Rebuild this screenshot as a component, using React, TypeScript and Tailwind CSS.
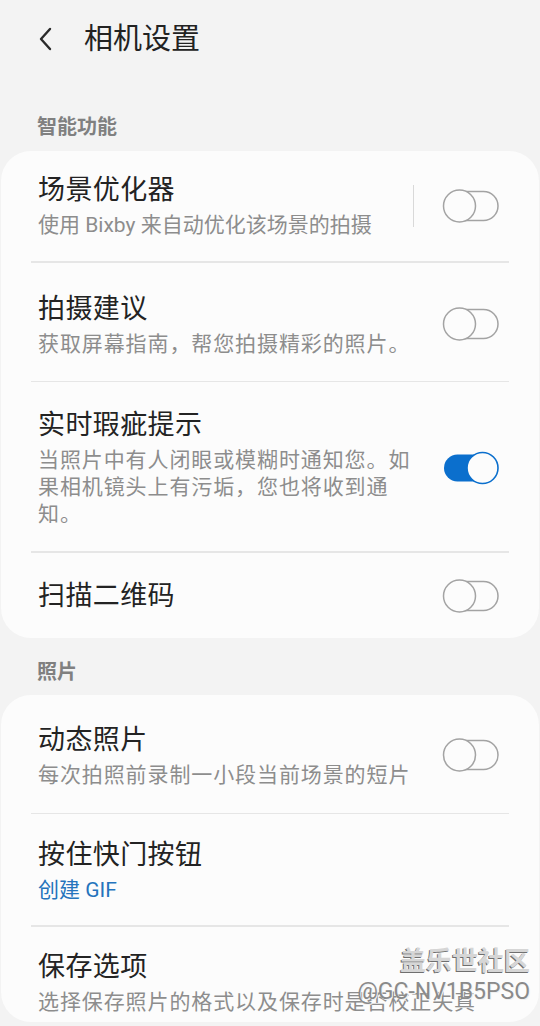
import React from "react";

const font = { fontFamily: 'Roboto, "Noto Sans CJK SC", sans-serif' };

function Toggle({ on = false }: { on?: boolean }) {
  if (on) {
    return (
      <svg width="58" height="36" viewBox="0 0 58 36" className="shrink-0">
        <rect x="2" y="4.5" width="52" height="27" rx="13.5" fill="#0b6fcd" />
        <circle cx="40.5" cy="18" r="15.5" fill="#fcfcfc" stroke="#0b6fcd" strokeWidth="1.6" />
      </svg>
    );
  }
  return (
    <svg width="58" height="36" viewBox="0 0 58 36" className="shrink-0">
      <rect x="4" y="3.5" width="52" height="29" rx="14.5" fill="none" stroke="#a3a3a3" strokeWidth="1.5" />
      <circle cx="17.5" cy="18" r="16" fill="#fcfcfc" stroke="#a3a3a3" strokeWidth="1.5" />
    </svg>
  );
}

interface RowProps {
  title: string;
  sub?: string;
  blueSub?: boolean;
  tight?: boolean;
  toggle?: "on" | "off";
  divider?: boolean;
  className: string;
}

function Row({ title, sub, blueSub, tight, toggle, divider, className }: RowProps) {
  return (
    <div className={`flex items-center pl-[37px] pr-[39px] ${className}`}>
      <div className={`flex-1 min-w-0 flex flex-col gap-[4px] ${divider ? "" : "mr-[23px]"}`}>
        <div className="text-[27px] leading-[36px] tracking-[0.4px] text-[#232323]">{title}</div>
        {sub && (
          <div
            className={`text-[21px] leading-[27px] ${tight ? "tracking-normal" : "tracking-[0.9px]"} ${
              blueSub ? "text-[#2574bd]" : "text-[#8d8d8d]"
            }`}
          >
            {sub}
          </div>
        )}
      </div>
      {divider && <div className="w-px h-[42px] bg-[#d9d9d9] mr-[28px]" />}
      {toggle && <Toggle on={toggle === "on"} />}
    </div>
  );
}

const Line = () => <div className="mx-[30px] h-[1.5px] bg-[#e6e6e6]" />;

export default function App() {
  return (
    <div className="w-[540px] h-[1026px] overflow-hidden bg-[#f3f3f3] relative" style={font}>
      {/* header */}
      <div className="h-[78px] flex items-center pl-[36px]">
        <svg width="22" height="26" viewBox="0 0 22 26" className="mr-[26px]">
          <path d="M14 3 L5 13 L14 23" fill="none" stroke="#2a2a2a" strokeWidth="2.4" strokeLinecap="round" strokeLinejoin="round" />
        </svg>
        <span className="text-[29px] text-[#222] leading-none">相机设置</span>
      </div>

      <div className="pt-[37px] pb-[12px] pl-[37px] text-[20px] leading-[24px] font-semibold text-[#808080]">
        智能功能
      </div>

      <div className="mx-[1px] bg-[#fcfcfc] rounded-[30px]">
        <Row className="pt-[21px] pb-[22px]" title="场景优化器" sub="使用 Bixby 来自动优化该场景的拍摄" tight toggle="off" divider />
        <Line />
        <Row className="pt-[28px] pb-[23px]" title="拍摄建议" sub="获取屏幕指南，帮您拍摄精彩的照片。" toggle="off" />
        <Line />
        <Row
          className="pt-[25px] pb-[23px]"
          title="实时瑕疵提示"
          sub="当照片中有人闭眼或模糊时通知您。如果相机镜头上有污垢，您也将收到通知。"
          toggle="on"
        />
        <Line />
        <Row className="pt-[25px] pb-[24px]" title="扫描二维码" toggle="off" />
      </div>

      <div className="pt-[22px] pb-[11px] pl-[37px] text-[20px] leading-[24px] font-semibold text-[#808080]">
        照片
      </div>

      <div className="mx-[1px] bg-[#fcfcfc] rounded-[30px]">
        <Row className="pt-[27px] pb-[24px]" title="动态照片" sub="每次拍照前录制一小段当前场景的短片" toggle="off" />
        <Line />
        <Row className="pt-[23px] pb-[21px]" title="按住快门按钮" sub="创建 GIF" blueSub tight />
        <Line />
        <Row className="pt-[22px] pb-[6px]" title="保存选项" sub="选择保存照片的格式以及保存时是否校正失真" />
      </div>

      {/* watermark */}
      <div className="absolute right-[10px] top-[944px] flex flex-col items-end pointer-events-none">
        <span className="text-[26px] leading-[34px] font-bold text-[#d6d6d6] [text-shadow:-1px_1px_0_#6f6f6f]">
          盖乐世社区
        </span>
        <span className="text-[23px] leading-[28px] text-[#8a8a8a] [text-shadow:1px_1px_0_#f0f0f0]">
          @GC-NV1B5PSO
        </span>
      </div>
    </div>
  );
}
